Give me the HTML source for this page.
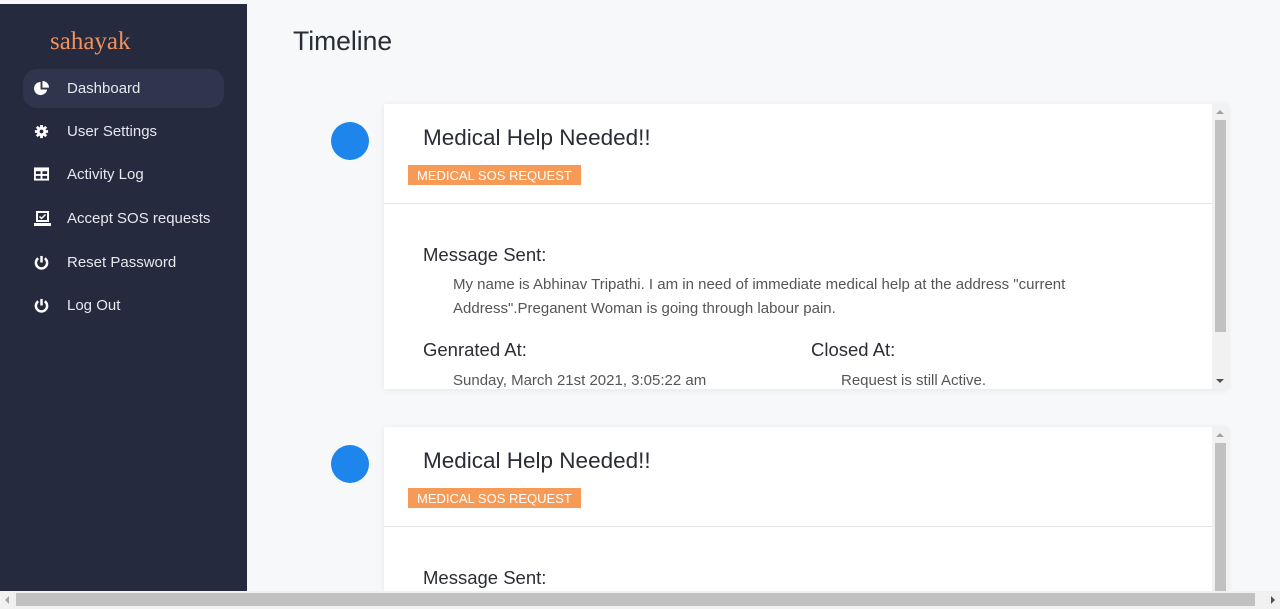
<!DOCTYPE html>
<html style="overflow:hidden;width:1280px;height:609px"><head><meta charset="utf-8"><style>
*{box-sizing:border-box;margin:0;padding:0}
body{width:1280px;height:609px;overflow:hidden;background:#f7f8fa;font-family:"Liberation Sans",sans-serif;position:relative}
.side{position:absolute;left:0;top:4px;width:247px;height:587px;background:#252a3f}
.logo{position:absolute;left:50px;top:24px;color:#f0905a;font-family:"Liberation Serif",serif;font-size:25px}
.nav{position:absolute;left:23px;width:201px;height:39px;color:#e6e8ee;font-size:15px;line-height:39px;padding-left:44px;border-radius:14px}
.nav.act{background:#2f354d}
.nav svg{position:absolute;left:11px;top:12px}
h1{position:absolute;left:293px;top:26px;font-weight:normal;font-size:26.5px;color:#2a2d35}
.dot{position:absolute;left:331px;width:38px;height:38px;border-radius:50%;background:#1e85ec}
.card{position:absolute;left:384px;width:844px;height:285px;background:#fff;box-shadow:0 1px 6px rgba(0,0,0,.08);overflow:hidden}
.card .t{position:absolute;left:39px;top:21px;font-size:22.5px;color:#2a2d35}
.badge{position:absolute;left:24px;top:61px;background:#f79a55;color:#fff;font-size:13px;padding:2px 9px;height:20px;line-height:17px}
.hr{position:absolute;left:0;top:99px;width:828px;border-top:1px solid #e6e6e6}
.h{position:absolute;font-size:18.5px;color:#2a2d35}
.p{position:absolute;font-size:15px;color:#555;line-height:24px}
.sb{position:absolute;right:0;top:0;width:16px;height:100%;background:#f1f1f1}
.sb .th{position:absolute;left:3px;top:16px;width:11px;background:#c1c1c1}
.au,.ad{position:absolute;left:4px;width:0;height:0;border-left:4px solid transparent;border-right:4px solid transparent}
.au{top:6px;border-bottom:4px solid #a3a3a3}
.ad{bottom:6px;border-top:4px solid #505050}
.hs{position:absolute;left:0;top:591px;width:1280px;height:18px;background:#f1f1f1}
.hs .th{position:absolute;left:16px;top:2px;width:1239px;height:13px;background:#c1c1c1}
.al,.ar{position:absolute;top:5px;width:0;height:0;border-top:4px solid transparent;border-bottom:4px solid transparent}
.al{left:5px;border-right:4px solid #a3a3a3}
.ar{right:5px;border-left:4px solid #505050}
</style></head><body>
<div class="side">
<div class="logo">sahayak</div>
<div class="nav act" style="top:65px"><svg width="15" height="15" viewBox="0 0 16 16"><path d="M7 1a7 7 0 1 0 7 8H7z" fill="#fff"/><path d="M9 0v7h7A7 7 0 0 0 9 0z" fill="#fff"/></svg>Dashboard</div>
<div class="nav" style="top:108px"><svg width="15" height="15" viewBox="0 0 16 16"><circle cx="8" cy="8" r="5" fill="#fff"/><g stroke="#fff" stroke-width="3"><path d="M8 1v14M1 8h14M3 3l10 10M13 3L3 13"/></g><circle cx="8" cy="8" r="2" fill="#252a3f"/></svg>User Settings</div>
<div class="nav" style="top:151px"><svg width="15" height="14" viewBox="0 0 16 14"><rect x="0" y="0" width="16" height="14" fill="#fff"/><rect x="2" y="4" width="5" height="3" fill="#252a3f"/><rect x="9" y="4" width="5" height="3" fill="#252a3f"/><rect x="2" y="9" width="5" height="3" fill="#252a3f"/><rect x="9" y="9" width="5" height="3" fill="#252a3f"/></svg>Activity Log</div>
<div class="nav" style="top:195px"><svg width="17" height="15" viewBox="0 0 17 15"><rect x="2" y="0" width="13" height="11" fill="#fff"/><rect x="4" y="2" width="9" height="7" fill="#252a3f"/><path d="M5.5 5.5l2 2 4-4" stroke="#fff" stroke-width="1.5" fill="none"/><rect x="0" y="12" width="17" height="3" fill="#fff"/></svg>Accept SOS requests</div>
<div class="nav" style="top:239px"><svg width="15" height="15" viewBox="0 0 16 16"><path d="M4.5 3.5a6 6 0 1 0 7 0" stroke="#fff" stroke-width="2.6" fill="none"/><path d="M8 1v7" stroke="#fff" stroke-width="2.6"/></svg>Reset Password</div>
<div class="nav" style="top:282px"><svg width="15" height="15" viewBox="0 0 16 16"><path d="M4.5 3.5a6 6 0 1 0 7 0" stroke="#fff" stroke-width="2.6" fill="none"/><path d="M8 1v7" stroke="#fff" stroke-width="2.6"/></svg>Log Out</div>
</div>
<h1>Timeline</h1>
<div class="dot" style="top:122px"></div>
<div class="card" style="top:104px">
<div class="t">Medical Help Needed!!</div>
<div class="badge">MEDICAL SOS REQUEST</div>
<div class="hr"></div>
<div class="h" style="left:39px;top:140px">Message Sent:</div>
<div class="p" style="left:69px;top:169px;width:700px">My name is Abhinav Tripathi. I am in need of immediate medical help at the address "current Address".Preganent Woman is going through labour pain.</div>
<div class="h" style="left:39px;top:235px">Genrated At:</div>
<div class="h" style="left:427px;top:235px">Closed At:</div>
<div class="p" style="left:69px;top:265px">Sunday, March 21st 2021, 3:05:22 am</div>
<div class="p" style="left:457px;top:265px">Request is still Active.</div>
<div class="sb"><div class="au"></div><div class="th" style="height:212px"></div><div class="ad"></div></div>
</div>
<div class="dot" style="top:445px"></div>
<div class="card" style="top:427px;height:164px">
<div class="t">Medical Help Needed!!</div>
<div class="badge">MEDICAL SOS REQUEST</div>
<div class="hr"></div>
<div class="h" style="left:39px;top:140px">Message Sent:</div>
<div class="sb"><div class="au"></div><div class="th" style="height:160px"></div></div>
</div>
<div class="hs"><div class="al"></div><div class="th"></div><div class="ar"></div></div>
</body></html>
